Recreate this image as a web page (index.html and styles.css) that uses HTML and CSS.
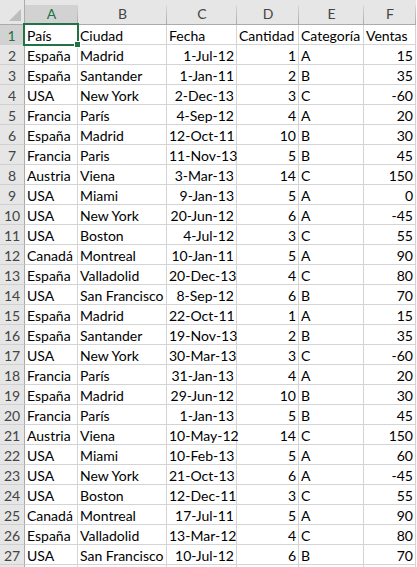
FILE: index.html
```html
<!DOCTYPE html>
<html lang="es">
<head>
<meta charset="utf-8">
<title>Hoja</title>
<link rel="stylesheet" href="styles.css">
</head>
<body>
<div class="sheet">
  <div class="corner"><span class="tri"></span></div>
  <div class="ch sel">A</div><div class="ch">B</div><div class="ch">C</div><div class="ch">D</div><div class="ch">E</div><div class="ch">F</div>

  <div class="rh sel">1</div><div class="c">País</div><div class="c">Ciudad</div><div class="c">Fecha</div><div class="c">Cantidad</div><div class="c">Categoría</div><div class="c">Ventas</div>
  <div class="rh">2</div><div class="c">España</div><div class="c">Madrid</div><div class="c n">1-Jul-12</div><div class="c n">1</div><div class="c">A</div><div class="c n">15</div>
  <div class="rh">3</div><div class="c">España</div><div class="c">Santander</div><div class="c n">1-Jan-11</div><div class="c n">2</div><div class="c">B</div><div class="c n">35</div>
  <div class="rh">4</div><div class="c">USA</div><div class="c">New York</div><div class="c n">2-Dec-13</div><div class="c n">3</div><div class="c">C</div><div class="c n">-60</div>
  <div class="rh">5</div><div class="c">Francia</div><div class="c">París</div><div class="c n">4-Sep-12</div><div class="c n">4</div><div class="c">A</div><div class="c n">20</div>
  <div class="rh">6</div><div class="c">España</div><div class="c">Madrid</div><div class="c n">12-Oct-11</div><div class="c n">10</div><div class="c">B</div><div class="c n">30</div>
  <div class="rh">7</div><div class="c">Francia</div><div class="c">Paris</div><div class="c n">11-Nov-13</div><div class="c n">5</div><div class="c">B</div><div class="c n">45</div>
  <div class="rh">8</div><div class="c">Austria</div><div class="c">Viena</div><div class="c n">3-Mar-13</div><div class="c n">14</div><div class="c">C</div><div class="c n">150</div>
  <div class="rh">9</div><div class="c">USA</div><div class="c">Miami</div><div class="c n">9-Jan-13</div><div class="c n">5</div><div class="c">A</div><div class="c n">0</div>
  <div class="rh">10</div><div class="c">USA</div><div class="c">New York</div><div class="c n">20-Jun-12</div><div class="c n">6</div><div class="c">A</div><div class="c n">-45</div>
  <div class="rh">11</div><div class="c">USA</div><div class="c">Boston</div><div class="c n">4-Jul-12</div><div class="c n">3</div><div class="c">C</div><div class="c n">55</div>
  <div class="rh">12</div><div class="c">Canadá</div><div class="c">Montreal</div><div class="c n">10-Jan-11</div><div class="c n">5</div><div class="c">A</div><div class="c n">90</div>
  <div class="rh">13</div><div class="c">España</div><div class="c">Valladolid</div><div class="c n">20-Dec-13</div><div class="c n">4</div><div class="c">C</div><div class="c n">80</div>
  <div class="rh">14</div><div class="c">USA</div><div class="c">San Francisco</div><div class="c n">8-Sep-12</div><div class="c n">6</div><div class="c">B</div><div class="c n">70</div>
  <div class="rh">15</div><div class="c">España</div><div class="c">Madrid</div><div class="c n">22-Oct-11</div><div class="c n">1</div><div class="c">A</div><div class="c n">15</div>
  <div class="rh">16</div><div class="c">España</div><div class="c">Santander</div><div class="c n">19-Nov-13</div><div class="c n">2</div><div class="c">B</div><div class="c n">35</div>
  <div class="rh">17</div><div class="c">USA</div><div class="c">New York</div><div class="c n">30-Mar-13</div><div class="c n">3</div><div class="c">C</div><div class="c n">-60</div>
  <div class="rh">18</div><div class="c">Francia</div><div class="c">París</div><div class="c n">31-Jan-13</div><div class="c n">4</div><div class="c">A</div><div class="c n">20</div>
  <div class="rh">19</div><div class="c">España</div><div class="c">Madrid</div><div class="c n">29-Jun-12</div><div class="c n">10</div><div class="c">B</div><div class="c n">30</div>
  <div class="rh">20</div><div class="c">Francia</div><div class="c">París</div><div class="c n">1-Jan-13</div><div class="c n">5</div><div class="c">B</div><div class="c n">45</div>
  <div class="rh">21</div><div class="c">Austria</div><div class="c">Viena</div><div class="c n">10-May-12</div><div class="c n">14</div><div class="c">C</div><div class="c n">150</div>
  <div class="rh">22</div><div class="c">USA</div><div class="c">Miami</div><div class="c n">10-Feb-13</div><div class="c n">5</div><div class="c">A</div><div class="c n">60</div>
  <div class="rh">23</div><div class="c">USA</div><div class="c">New York</div><div class="c n">21-Oct-13</div><div class="c n">6</div><div class="c">A</div><div class="c n">-45</div>
  <div class="rh">24</div><div class="c">USA</div><div class="c">Boston</div><div class="c n">12-Dec-11</div><div class="c n">3</div><div class="c">C</div><div class="c n">55</div>
  <div class="rh">25</div><div class="c">Canadá</div><div class="c">Montreal</div><div class="c n">17-Jul-11</div><div class="c n">5</div><div class="c">A</div><div class="c n">90</div>
  <div class="rh">26</div><div class="c">España</div><div class="c">Valladolid</div><div class="c n">13-Mar-12</div><div class="c n">4</div><div class="c">C</div><div class="c n">80</div>
  <div class="rh">27</div><div class="c">USA</div><div class="c">San Francisco</div><div class="c n">10-Jul-12</div><div class="c n">6</div><div class="c">B</div><div class="c n">70</div>
  <div class="rh"></div><div class="c"></div><div class="c"></div><div class="c"></div><div class="c"></div><div class="c"></div><div class="c"></div>

  <div class="selbox"><span class="handle"></span></div>
</div>
</body>
</html>
```
FILE: styles.css
```css
html, body {
  margin: 0;
  padding: 0;
  background: #ffffff;
  overflow: hidden;
}
body {
  width: 417px;
  height: 567px;
}
.sheet {
  position: relative;
  display: grid;
  grid-template-columns: 25px 53px 89px 70px 62px 65px 52px;
  grid-template-rows: 25px;
  grid-auto-rows: 20px;
  font-family: Lato, "Open Sans", sans-serif;
  font-size: 14px;
  color: #000000;
}
.corner {
  position: relative;
  background: #e6e6e6;
  border-right: 1px solid #ababab;
  border-bottom: 1px solid #ababab;
  box-sizing: border-box;
}
.tri {
  position: absolute;
  right: 3px;
  bottom: 3px;
  width: 0;
  height: 0;
  border-left: 12px solid transparent;
  border-bottom: 12px solid #bdbdbd;
}
.ch {
  box-sizing: border-box;
  background:
    linear-gradient(to bottom, rgba(171,171,171,0) 4px, #cfcfcf 8px, #ababab 100%) right top / 1px 100% no-repeat,
    #e6e6e6;
  border-bottom: 1px solid #ababab;
  color: #444444;
  text-align: center;
  line-height: 28px;
  font-size: 14px;
}
.ch.sel {
  background:
    linear-gradient(to bottom, rgba(171,171,171,0) 4px, #cfcfcf 8px, #ababab 100%) right top / 1px 100% no-repeat,
    linear-gradient(to bottom, #e6e6e6 5px, #d2d2d2 5px);
  color: #217346;
  border-bottom: 2px solid #217346;
  line-height: 28px;
}
.rh {
  box-sizing: border-box;
  background: #e6e6e6;
  border-right: 1px solid #ababab;
  border-bottom: 1px solid #d0d0d0;
  color: #444444;
  text-align: center;
  line-height: 22px;
  font-size: 14px;
}
.rh.sel {
  background: #d2d2d2;
  color: #217346;
  border-right: 2px solid #217346;
}
.c {
  box-sizing: border-box;
  border-right: 1px solid #d4d4d4;
  border-bottom: 1px solid #d4d4d4;
  padding: 0 2px 0 2px;
  line-height: 22px;
  white-space: nowrap;
  overflow: visible;
}
.c.n {
  text-align: right;
}
.selbox {
  position: absolute;
  left: 23px;
  top: 23px;
  width: 56px;
  height: 23px;
  border: 2px solid #217346;
  box-sizing: border-box;
  pointer-events: none;
}
.handle {
  position: absolute;
  right: -4px;
  bottom: -4px;
  width: 5px;
  height: 5px;
  background: #217346;
  border: 1px solid #ffffff;
}
```
